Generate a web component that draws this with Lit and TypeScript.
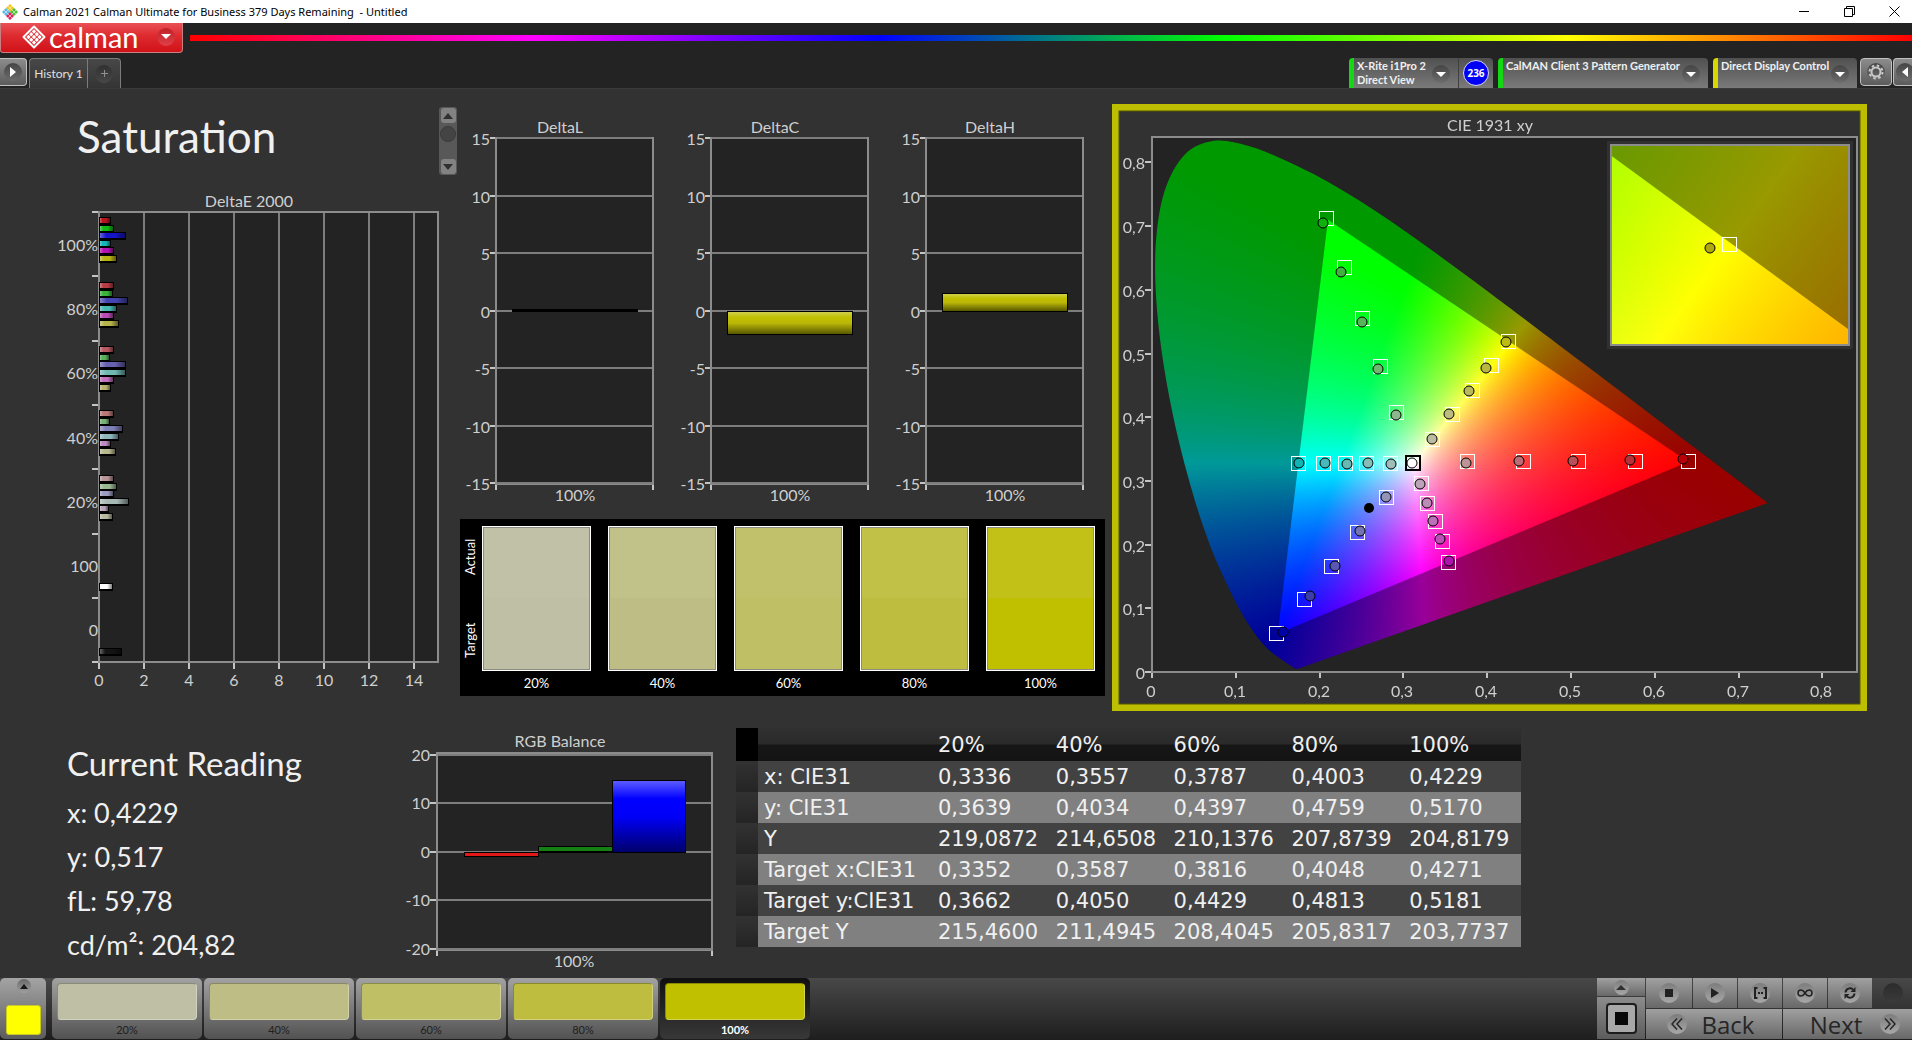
import { LitElement, html, svg, css } from "lit";
import { customElement, property } from "lit/decorators.js";
import { classMap } from "lit/directives/class-map.js";
import { styleMap } from "lit/directives/style-map.js";

/* ---------- data ---------- */

const LEVELS = ["20%", "40%", "60%", "80%", "100%"];

const SWATCHES = [
  { label: "20%", actual: "#c1c1a8", target: "#bfbfa6" },
  { label: "40%", actual: "#c1c18a", target: "#bfbd86" },
  { label: "60%", actual: "#c1c16b", target: "#bfbf66" },
  { label: "80%", actual: "#c1c148", target: "#bfbd3f" },
  { label: "100%", actual: "#c1c118", target: "#c0c000" },
];

const TABLE: [string, string[]][] = [
  ["x: CIE31", ["0,3336", "0,3557", "0,3787", "0,4003", "0,4229"]],
  ["y: CIE31", ["0,3639", "0,4034", "0,4397", "0,4759", "0,5170"]],
  ["Y", ["219,0872", "214,6508", "210,1376", "207,8739", "204,8179"]],
  ["Target x:CIE31", ["0,3352", "0,3587", "0,3816", "0,4048", "0,4271"]],
  ["Target y:CIE31", ["0,3662", "0,4050", "0,4429", "0,4813", "0,5181"]],
  ["Target Y", ["215,4600", "211,4945", "208,4045", "205,8317", "203,7737"]],
];

/* first bar centre, bar lengths and bar colours of each saturation group */
const DELTA_E: { y: number; bars: [number, string][] }[] = [
  { y: 37, bars: [[12, "#b81420"], [15, "#14b814"], [27, "#1414c8"], [12, "#14b8b8"], [15, "#b414b4"], [18, "#b8b414"]] },
  { y: 102, bars: [[15, "#b83c44"], [14, "#3cb43c"], [29, "#4444b0"], [18, "#48b8b4"], [15, "#b84cb4"], [20, "#b8b44c"]] },
  { y: 166, bars: [[15, "#b85860"], [11, "#58b058"], [27, "#6860b0"], [27, "#70b8b4"], [15, "#c070bc"], [12, "#b8b470"]] },
  { y: 230, bars: [[15, "#b87878"], [11, "#78b078"], [24, "#8080b8"], [20, "#90b8bc"], [12, "#bc8cc0"], [17, "#b8b890"]] },
  { y: 295, bars: [[15, "#b89498"], [18, "#98b890"], [15, "#9c9cc0"], [30, "#a8b8b4"], [10, "#b8a4b8"], [14, "#b8b8a0"]] },
  { y: 403, bars: [[14, "#ffffff"]] },
  { y: 468, bars: [[23, "#141414"]] },
];

/* ---------- CIE diagram geometry ---------- */

const CIE_W = 741;
const CIE_H = 593;
const px = (x: number) => 33 + x * 838;
const py = (y: number) => 561 - y * 637;

const LOCUS = [
  [0.1741, 0.005], [0.1714, 0.0051], [0.1689, 0.0069], [0.1644, 0.0109], [0.1566, 0.0177], [0.144, 0.0297],
  [0.1355, 0.0399], [0.1241, 0.0578], [0.1096, 0.0868], [0.0913, 0.1327], [0.0687, 0.2007], [0.0454, 0.295],
  [0.0235, 0.4127], [0.0082, 0.5384], [0.0039, 0.6548], [0.0139, 0.7502], [0.0389, 0.812], [0.0743, 0.8338],
  [0.1142, 0.8262], [0.1547, 0.8059], [0.1929, 0.7816], [0.2296, 0.7543], [0.2658, 0.7243], [0.3016, 0.6923],
  [0.3373, 0.6589], [0.3731, 0.6245], [0.4087, 0.5896], [0.4441, 0.5547], [0.5125, 0.4866], [0.5752, 0.4242],
  [0.627, 0.3725], [0.6658, 0.334], [0.6915, 0.3083], [0.719, 0.2809], [0.7347, 0.2653],
];
const GAMUT = [[0.64, 0.33], [0.21, 0.71], [0.15, 0.06]];

/* target centre, reading centre, fill of the reading */
const POINTS: [number, number, number, number, string][] = [
  [207, 107, 204, 112, "#10b010"], [225, 156, 222, 161, "#40b040"], [243, 207, 243, 211, "#58b458"],
  [261, 255, 259, 258, "#70b870"], [277, 301, 277, 304, "#8cb88c"],
  [389, 230, 387, 231, "#bcbc14"], [372, 254, 367, 257, "#b8b840"], [353, 279, 350, 280, "#b8b85c"],
  [333, 303, 330, 303, "#bcbc80"], [313, 328, 313, 328, "#bcbca4"],
  [179, 352, 180, 352, "#10b4b4"], [204, 352, 206, 352, "#48b8b8"], [226, 352, 228, 353, "#68b8b4"],
  [247, 352, 249, 352, "#88bcb8"], [271, 352, 272, 353, "#a0bcb8"],
  [348, 350, 347, 352, "#bc9494"], [404, 350, 400, 350, "#bc6c74"], [459, 350, 454, 350, "#b85058"],
  [516, 350, 511, 349, "#b83038"], [569, 350, 564, 348, "#b80008"],
  [267, 386, 267, 386, "#9494b8"], [238, 421, 241, 420, "#7474b4"], [212, 455, 216, 455, "#5858b4"],
  [185, 488, 191, 485, "#3c3cac"], [157, 522, 164, 521, "#0000a8"],
  [302, 372, 301, 373, "#bca4b8"], [308, 392, 308, 392, "#bc8cb8"], [316, 410, 314, 410, "#bc70b8"],
  [323, 430, 321, 428, "#bc50b8"], [329, 451, 330, 450, "#b010b0"],
];

/** Brightest displayable colour of a chromaticity, scaled by `level`. */
function chroma(x: number, y: number, level: number): [number, number, number] {
  const X = x / y;
  const Z = (1 - x - y) / y;
  const r = Math.max(0, 3.2406 * X - 1.5372 - 0.4986 * Z);
  const g = Math.max(0, -0.9689 * X + 1.8758 + 0.0415 * Z);
  const b = Math.max(0, 0.0557 * X - 0.204 + 1.057 * Z);
  const k = (255 * level) / Math.max(r, g, b, 0.0001);
  return [r * k, g * k, b * k];
}

function field(w: number, h: number, level: number, at: (i: number, j: number) => [number, number]) {
  const c = document.createElement("canvas");
  c.width = w;
  c.height = h;
  const ctx = c.getContext("2d")!;
  const img = ctx.createImageData(w, h);
  for (let j = 0; j < h; j++) {
    for (let i = 0; i < w; i++) {
      const [x, y] = at(i, j);
      const [r, g, b] = chroma(x, Math.max(y, 0.002), level);
      const o = (j * w + i) * 4;
      img.data[o] = r;
      img.data[o + 1] = g;
      img.data[o + 2] = b;
      img.data[o + 3] = 255;
    }
  }
  ctx.putImageData(img, 0, 0);
  return c;
}

function polygon(points: number[][], fx: (v: number) => number, fy: (v: number) => number) {
  const p = new Path2D();
  points.forEach(([x, y], i) => (i ? p.lineTo(fx(x), fy(y)) : p.moveTo(fx(x), fy(y))));
  p.closePath();
  return p;
}

/** Closed outline that runs through every point as a Catmull-Rom curve. */
function smooth(points: number[][], fx: (v: number) => number, fy: (v: number) => number) {
  const q = points.map(([x, y]) => [fx(x), fy(y)]);
  const p = new Path2D();
  p.moveTo(q[0][0], q[0][1]);
  for (let i = 0; i < q.length - 1; i++) {
    const a = q[Math.max(i - 1, 0)];
    const b = q[i];
    const c = q[i + 1];
    const d = q[Math.min(i + 2, q.length - 1)];
    p.bezierCurveTo(
      b[0] + (c[0] - a[0]) / 6, b[1] + (c[1] - a[1]) / 6,
      c[0] - (d[0] - b[0]) / 6, c[1] - (d[1] - b[1]) / 6,
      c[0], c[1]
    );
  }
  p.closePath();
  return p;
}

/* ---------- shared styles ---------- */

const chartStyles = css`
  :host {
    display: block;
  }
  svg {
    display: block;
    width: 100%;
    height: auto;
    overflow: visible;
  }
  text {
    font-family: Lato, "Liberation Sans", sans-serif;
    font-size: 16px;
    fill: #cfcfcf;
  }
  .end {
    text-anchor: end;
  }
  .mid {
    text-anchor: middle;
  }
  .plot {
    fill: #232323;
    stroke: #8c8c8c;
    stroke-width: 2;
    shape-rendering: crispEdges;
  }
  .grid {
    stroke: #7d7d7d;
    stroke-width: 2;
    shape-rendering: crispEdges;
  }
  .tick {
    stroke: #c4c4c4;
    stroke-width: 2;
    shape-rendering: crispEdges;
  }
`;

/* ---------- DeltaE 2000 ---------- */

@customElement("delta-e-chart")
class DeltaEChart extends LitElement {
  static styles = chartStyles;

  render() {
    const names = ["100%", "80%", "60%", "40%", "20%", "100", "0"];
    const xs = [0, 1, 2, 3, 4, 5, 6, 7];
    return html`<svg viewBox="0 0 460 516" role="img" aria-label="DeltaE 2000">
      <defs>
        <linearGradient id="sheen">
          <stop offset="0" stop-color="#fff" stop-opacity=".35" />
          <stop offset=".25" stop-color="#fff" stop-opacity="0" />
          <stop offset=".6" stop-color="#000" stop-opacity="0" />
          <stop offset="1" stop-color="#000" stop-opacity=".5" />
        </linearGradient>
      </defs>
      <text class="mid" x="249" y="23">DeltaE 2000</text>
      <rect class="plot" x="99" y="28" width="339" height="450" />
      ${xs.map((i) => {
        const x = 99 + Math.round(i * 45);
        return svg`${i ? svg`<line class="grid" x1=${x} x2=${x} y1="29" y2="477" />` : ""}
          <line class="tick" x1=${x} x2=${x} y1="479" y2="485" />
          <text class="mid" x=${x} y="502">${i * 2}</text>`;
      })}
      ${xs.map((i) => {
        const y = 28 + Math.round(i * 64.3);
        return svg`<line class="tick" x1="92" x2="98" y1=${y} y2=${y} />`;
      })}
      ${names.map((n, i) => svg`<text class="end" x="98" y=${67 + Math.round(i * 64.2)}>${n}</text>`)}
      ${DELTA_E.map((g) =>
        g.bars.map(([w, c], i) => {
          const y = g.y + Math.round(i * 7.5) - 4;
          return svg`<rect x="99" y=${y} width=${w} height="8" fill="#000" />
            <rect x="100" y=${y + 1} width=${w - 2} height="5" fill=${c} />
            <rect x="100" y=${y + 1} width=${w - 2} height="5" fill="url(#sheen)" />`;
        })
      )}
    </svg>`;
  }
}

/* ---------- DeltaL / DeltaC / DeltaH ---------- */

@customElement("delta-chart")
class DeltaChart extends LitElement {
  static styles = chartStyles;
  @property() name = "";
  @property({ type: Number }) value = 0;

  render() {
    const zero = 199;
    const h = Math.max(3, Math.abs(Math.round(this.value * 11.6)));
    const top = this.value < 0 ? zero : zero + 1 - h;
    return html`<svg viewBox="0 0 215 407" role="img" aria-label=${this.name}>
      <defs>
        <linearGradient id="bar" x2="0" y2="1">
          <stop offset="0" stop-color="#cfcf50" />
          <stop offset=".25" stop-color="#c0c000" />
          <stop offset=".5" stop-color="#bcb808" />
          <stop offset="1" stop-color="#585800" />
        </linearGradient>
      </defs>
      <text class="mid" x="100" y="21">${this.name}</text>
      <rect class="plot" x="36" y="26" width="157" height="346" />
      ${[15, 10, 5, 0, -5, -10, -15].map((v) => {
        const y = zero - Math.round(v * 11.5);
        return svg`<line class="grid" x1="37" x2="192" y1=${y} y2=${y} />
          <line class="tick" x1="30" x2="35" y1=${y} y2=${y} />
          <text class="end" x="30" y=${y + 7}>${v}</text>`;
      })}
      <line class="tick" x1="36" x2="36" y1="373" y2="378" />
      <line class="tick" x1="193" x2="193" y1="373" y2="378" />
      <rect x="52" y=${top} width="126" height=${h} fill="#000" />
      ${h > 3 ? svg`<rect x="53" y=${top + 1} width="124" height=${h - 2} fill="url(#bar)" />` : ""}
      <text class="mid" x="115" y="389">100%</text>
    </svg>`;
  }
}

/* ---------- RGB balance ---------- */

@customElement("rgb-chart")
class RgbChart extends LitElement {
  static styles = chartStyles;

  render() {
    return html`<svg viewBox="0 0 326 242" role="img" aria-label="RGB Balance">
      <defs>
        <linearGradient id="blue" x2="0" y2="1">
          <stop offset="0" stop-color="#5c5cff" />
          <stop offset=".25" stop-color="#0000ff" />
          <stop offset=".5" stop-color="#0000f8" />
          <stop offset="1" stop-color="#00006c" />
        </linearGradient>
      </defs>
      <text class="mid" x="150" y="19">RGB Balance</text>
      <rect class="plot" x="27" y="25" width="275" height="197" />
      ${[20, 10, 0, -10, -20].map((v) => {
        const y = 124 - Math.round(v * 4.85);
        return svg`<line class="grid" x1="28" x2="301" y1=${y} y2=${y} />
          <line class="tick" x1="20" x2="26" y1=${y} y2=${y} />
          <text class="end" x="20" y=${y + 6}>${v}</text>`;
      })}
      <line class="tick" x1="27" x2="27" y1="223" y2="228" />
      <line class="tick" x1="302" x2="302" y1="223" y2="228" />
      <rect x="54" y="124" width="75" height="5" fill="#000" />
      <rect x="55" y="125" width="73" height="3" fill="#e01818" />
      <rect x="128" y="118" width="75" height="7" fill="#000" />
      <rect x="129" y="119" width="73" height="4" fill="#148014" />
      <rect x="202" y="52" width="74" height="73" fill="#000" />
      <rect x="203" y="53" width="72" height="71" fill="url(#blue)" />
      <text class="mid" x="164" y="239">100%</text>
    </svg>`;
  }
}

/* ---------- CIE 1931 xy ---------- */

@customElement("cie-chart")
class CieChart extends LitElement {
  static styles = [
    chartStyles,
    css`
      :host {
        display: grid;
        border: 7px solid #bebe00;
      }
      canvas,
      svg {
        grid-area: 1 / 1;
        width: 100%;
        height: auto;
      }
      .frame {
        fill: none;
        stroke: #8c8c8c;
        stroke-width: 2;
        shape-rendering: crispEdges;
      }
      .rim {
        fill: none;
        stroke: #565600;
      }
      .target {
        fill: none;
        stroke: #fff;
        stroke-width: 1;
        shape-rendering: crispEdges;
      }
      .white {
        stroke: #000;
        stroke-width: 2;
      }
      .reading {
        stroke: #000;
        stroke-width: 1;
      }
    `,
  ];

  firstUpdated() {
    const ctx = this.renderRoot.querySelector("canvas")!.getContext("2d")!;
    ctx.fillStyle = "#232323";
    ctx.fillRect(33, 26, 705, 535);

    const at = (i: number, j: number): [number, number] => [(i - 33) / 838, (561 - j) / 637];
    ctx.save();
    ctx.clip(smooth(LOCUS, px, py));
    ctx.drawImage(field(CIE_W, CIE_H, 0.6, at), 0, 0);
    ctx.clip(polygon(GAMUT, px, py));
    ctx.drawImage(field(CIE_W, CIE_H, 1, at), 0, 0);
    ctx.restore();

    /* magnified view round the current target */
    const [L, T, W, H] = [492, 34, 238, 200];
    const zx = (x: number) => L + W / 2 + (x - 0.4271) * 4524;
    const zy = (y: number) => T + H / 2 - (y - 0.5175) * 3750;
    const zoom = (i: number, j: number): [number, number] => [
      0.4271 + (i - W / 2) / 4524,
      0.5175 - (j - H / 2) / 3750,
    ];
    ctx.fillStyle = "#303030";
    ctx.fillRect(L - 4, T - 4, W + 8, H + 8);
    ctx.drawImage(field(W, H, 0.6, zoom), L, T);
    ctx.save();
    ctx.beginPath();
    ctx.rect(L, T, W, H);
    ctx.clip();
    ctx.clip(polygon(GAMUT, zx, zy));
    ctx.drawImage(field(W, H, 1, zoom), L, T);
    ctx.restore();
  }

  render() {
    const steps = [0, 1, 2, 3, 4, 5, 6, 7, 8];
    const name = (i: number) => (i ? `0,${i}` : "0");
    const box = (x: number, y: number, cls = "") =>
      svg`<rect class=${"target " + cls} x=${x - 7} y=${y - 7} width="14" height="14" />`;
    return html`<canvas width=${CIE_W} height=${CIE_H}></canvas>
      <svg viewBox="0 0 ${CIE_W} ${CIE_H}" role="img" aria-label="CIE 1931 xy">
        <rect class="rim" x="0" y="0" width=${CIE_W} height=${CIE_H} />
        <text class="mid" x="371" y="20">CIE 1931 xy</text>
        <rect class="frame" x="33" y="26" width="705" height="535" />
        ${steps.map((i) => {
          const x = Math.round(px(i / 10));
          const y = Math.round(py(i / 10));
          return svg`<line class="tick" x1=${x} x2=${x} y1="562" y2="567" />
            <text class="mid" x=${x - 1} y="586">${name(i)}</text>
            <line class="tick" x1="26" x2="32" y1=${y} y2=${y} />
            <text class="end" x="26" y=${y + 7}>${name(i)}</text>`;
        })}
        ${POINTS.map((p) => box(p[0], p[1]))} ${box(294, 352, "white")}
        ${POINTS.map((p) => svg`<circle class="reading" cx=${p[2]} cy=${p[3]} r="5" fill=${p[4]} />`)}
        <circle class="reading" cx="293" cy="352" r="5" fill="#fff" />
        <circle cx="250" cy="397" r="5" />
        <rect class="frame" x="492" y="34" width="238" height="200" />
        ${box(610, 133)}
        <circle class="reading" cx="591" cy="137" r="5" fill="#b0a810" />
      </svg>`;
  }
}

/* ---------- application ---------- */

@customElement("app-root")
class AppRoot extends LitElement {
  static styles = css`
    * {
      box-sizing: border-box;
    }
    :host {
      display: flex;
      flex-direction: column;
      min-height: 100vh;
      background: #323232;
      color: #f0f0f0;
      font-family: Lato, "Liberation Sans", sans-serif;
      overflow: hidden;
    }
    button {
      margin: 0;
      padding: 0;
      border: 0;
      font: inherit;
      color: inherit;
      background: none;
      display: flex;
      align-items: center;
      justify-content: center;
    }
    svg {
      display: block;
      flex: none;
    }

    /* title bar */
    .titlebar {
      display: flex;
      align-items: center;
      height: 23px;
      background: #fff;
      color: #000;
      font: 11px "Noto Sans", "Open Sans", sans-serif;
      white-space: pre;
    }
    .titlebar > svg {
      margin: 0 5px 0 2px;
    }
    .caption {
      flex: 1;
    }
    .winbtn {
      width: 45px;
      height: 23px;
    }
    .close {
      width: 40px;
      padding-left: 5px;
    }

    /* header */
    .top {
      background: #232323;
    }
    .brandrow {
      display: flex;
      align-items: center;
      gap: 7px;
      height: 30px;
    }
    .brand {
      width: 183px;
      height: 30px;
      padding: 0 7px 2px 21px;
      gap: 3px;
      justify-content: flex-start;
      border: 1px solid #c98080;
      border-top: 0;
      border-radius: 0 0 4px 3px;
      background: linear-gradient(#ea5055, #dd2a2f 45%, #d01218);
      font-size: 29px;
      line-height: 26px;
      color: #fff;
    }
    .brandname {
      flex: 1;
      text-align: left;
    }
    .spectrum {
      flex: 1;
      height: 6px;
      background: linear-gradient(90deg, #f00, #f0f, #00f, #0f0, #ff0, #f00);
    }
    .tabs {
      display: flex;
      align-items: flex-end;
      height: 35px;
      font-size: 12px;
      color: #e0e0e0;
    }
    .knob {
      width: 18px;
      height: 18px;
      border-radius: 50%;
      background: linear-gradient(#454545, #6c6c6c);
      display: flex;
      align-items: center;
      justify-content: center;
      flex: none;
    }
    .redknob {
      background: linear-gradient(#c02028, #e04048);
    }
    .square {
      width: 32px;
      height: 28px;
      margin-bottom: 2px;
      border: 1px solid #c0c0c0;
      border-radius: 4px;
      background: linear-gradient(#8c8c8c, #5c5c5c);
    }
    .open {
      width: 27px;
      border-left: 0;
      border-radius: 0 4px 4px 0;
      margin-right: 2px;
    }
    .tab {
      height: 30px;
      width: 59px;
      border: 1px solid #7c7c7c;
      border-bottom: 0;
      border-radius: 4px 0 0 0;
      background: linear-gradient(#484848, #343434);
    }
    .add {
      width: 34px;
      margin-left: -1px;
      border-radius: 0 4px 0 0;
    }
    .addknob {
      background: linear-gradient(#303030, #484848);
    }
    .spacer {
      flex: 1;
    }
    .device {
      display: flex;
      height: 30px;
      border-left: 5px solid #14d814;
      border-radius: 4px 4px 0 0;
      background: linear-gradient(#505050, #7a7a7a);
      margin-right: 5px;
    }
    .yellow {
      border-left-color: #d8d800;
      margin-right: 3px;
    }
    .pick {
      flex: 1;
      justify-content: space-between;
      align-items: flex-start;
      text-align: left;
      padding: 1px 8px 0 3px;
      line-height: 14px;
      font-size: 11px;
      font-weight: 700;
      color: #f0f0f0;
      white-space: nowrap;
    }
    .pick .knob {
      margin-top: 6px;
    }
    .meter {
      width: 144px;
    }
    .source {
      width: 210px;
    }
    .display {
      width: 144px;
    }
    .badge {
      width: 35px;
      border-left: 1px solid #404040;
      display: flex;
      justify-content: center;
      padding-top: 2px;
    }
    .count {
      width: 26px;
      height: 26px;
      border: 1px solid #d8d8f8;
      border-radius: 50%;
      background: #0000f4;
      font: 700 10px/24px "Open Sans", sans-serif;
      text-align: center;
      color: #fff;
    }
    .edge {
      width: 19px;
      border-radius: 4px 0 0 4px;
      border-right: 0;
      margin-left: 1px;
      padding-left: 4px;
    }

    /* workspace */
    main {
      flex: 1;
      border-top: 1px solid #3a3a3a;
    }
    .upper {
      display: grid;
      grid-template-columns: minmax(0, 460fr) minmax(0, 652fr) minmax(0, 755fr) minmax(0, 45fr);
      align-items: start;
      padding: 15px 0 9px;
    }
    .heading {
      display: flex;
      justify-content: space-between;
      align-items: flex-start;
      padding: 3px 3px 9px 77px;
    }
    h1 {
      margin: 0;
      font-size: 44px;
      line-height: 58px;
      font-weight: 400;
    }
    .scroller {
      width: 18px;
      height: 68px;
      border-radius: 3px;
      background: #585858;
      display: flex;
      flex-direction: column;
      justify-content: space-between;
      align-items: center;
      padding: 1px;
    }
    .step {
      width: 15px;
      height: 15px;
      border-radius: 3px;
      background: #828282;
    }
    .thumb {
      width: 16px;
      height: 16px;
      border-radius: 50%;
      background: #444;
      border: 1px solid #3a3a3a;
      margin-bottom: 15px;
    }
    .middle {
      padding: 8px 7px 0 0;
    }
    .deltas {
      display: grid;
      grid-template-columns: repeat(3, minmax(0, 1fr));
    }
    .patches {
      display: flex;
      background: #000;
      padding: 7px 10px 1px 0;
      font-size: 13px;
      line-height: 24px;
      color: #fff;
    }
    .sides {
      width: 20px;
      height: 145px;
      margin-right: 2px;
      display: flex;
      flex-direction: row-reverse;
      writing-mode: vertical-rl;
      transform: rotate(180deg);
      justify-content: space-between;
      padding: 13px 0;
      line-height: 20px;
    }
    .patchrow {
      flex: 1;
      display: grid;
      grid-template-columns: repeat(5, minmax(0, 1fr));
      gap: 17px;
      text-align: center;
    }
    .patch {
      height: 145px;
      border: 1px solid #fff;
      outline: 1px solid #8c8c80;
      outline-offset: -2px;
    }

    .lower {
      display: grid;
      grid-template-columns: minmax(0, 410fr) minmax(0, 326fr) minmax(0, 785fr) minmax(0, 391fr);
      align-items: start;
      padding: 8px 0;
    }
    .reading {
      padding: 13px 0 0 67px;
      font-size: 27px;
      line-height: 44px;
    }
    h2 {
      margin: 0 0 6px;
      font-size: 33px;
      line-height: 44px;
      font-weight: 400;
    }
    p {
      margin: 0;
    }
    table {
      width: 100%;
      table-layout: fixed;
      border-collapse: collapse;
      font: 21px/29px "DejaVu Sans", sans-serif;
      color: #f0f0f0;
    }
    th,
    td {
      padding: 2px 0 0 6px;
      height: 31px;
      font-weight: 400;
      text-align: left;
      white-space: nowrap;
    }
    thead th {
      height: 33px;
      background: linear-gradient(#303030, #2a2a2a 48%, #161616 52%, #141414);
    }
    .c0 {
      width: 22px;
    }
    .c1 {
      width: 174px;
    }
    tbody tr {
      background: #424242;
    }
    tbody tr:nth-child(even) {
      background: #808080;
    }
    tbody td:first-child {
      background: linear-gradient(#323232, #242424);
    }
    thead th:first-child {
      background: #000;
    }

    /* bottom bar */
    .bar {
      display: flex;
      height: 62px;
      background: linear-gradient(#484848, #1e1e1e);
    }
    .source-cell {
      width: 46px;
      height: 61px;
      margin-right: 6px;
      border-radius: 5px;
      background: linear-gradient(#a4a4a4, #5c5c5c);
      flex-direction: column;
      justify-content: space-between;
      padding: 1px 0 4px 1px;
    }
    .source-cell .knob {
      width: 14px;
      height: 14px;
      background: linear-gradient(#686868, #a0a0a0);
    }
    .chip {
      width: 35px;
      height: 30px;
      border-radius: 3px;
      background: #ffff00;
      border: 1px solid #c8c820;
    }
    .tile {
      width: 150px;
      height: 61px;
      margin-right: 2px;
      padding: 5px 5px 0;
      border-radius: 5px;
      background: linear-gradient(#a2a2a2, #525252);
      flex-direction: column;
      justify-content: flex-start;
      gap: 3px;
      font-size: 11px;
      line-height: 14px;
      color: #202020;
    }
    .fill {
      width: 100%;
      height: 37px;
      border-radius: 4px;
      border: 1px solid rgb(0 0 0 / 0.28);
      border-right-color: rgb(255 255 255 / 0.3);
      border-bottom-color: rgb(255 255 255 / 0.3);
    }
    .active {
      background: linear-gradient(#101010, #383838);
      color: #fff;
      font-weight: 700;
    }
    .transport {
      display: grid;
      grid-template-columns: 48px 46px 44px 44px 44px 44px 39px;
      grid-template-rows: 30px 30px;
      gap: 1px;
      height: 61px;
      color: #262626;
    }
    .transport button {
      background: linear-gradient(#a0a0a0, #686868);
    }
    .transport .knob {
      width: 20px;
      height: 20px;
      background: linear-gradient(#7c7c7c, #a8a8a8);
    }
    .transport .stack {
      grid-row: 1 / 3;
      display: grid;
      grid-template-rows: 18px 1fr;
      gap: 1px;
    }
    .transport .stack .knob {
      width: 15px;
      height: 15px;
    }
    .transport .stack .window {
      background: linear-gradient(#8c8c8c, #5c5c5c);
    }
    .transport .off {
      background: none;
    }
    .transport .off .knob {
      background: linear-gradient(#2c2c2c, #3a3a3a);
    }
    .transport .nav {
      font: 24px "Open Sans", "Noto Sans", sans-serif;
      gap: 15px;
    }
    .transport .back {
      grid-column: 2 / 5;
      padding-right: 7px;
    }
    .transport .next {
      grid-column: 5 / 8;
      padding-left: 15px;
      gap: 18px;
    }
  `;

  private arrow() {
    return html`<svg width="10" height="5" viewBox="0 0 10 5"><path d="M0 0h10L5 5z" fill="#fff" /></svg>`;
  }

  render() {
    const stones = [
      [12, 6.5], [9.2, 9.2], [14.8, 9.2], [6.5, 12], [12, 12], [17.5, 12], [9.2, 14.8], [14.8, 14.8], [12, 17.5],
    ];
    return html`
      <div class="titlebar">
        <svg width="16" height="16" viewBox="0 0 16 16">
          <path d="M8 0l4 4-4 4-4-4z" fill="#f5c518" />
          <path d="M4 4l4 4-4 4-4-4z" fill="#58b8e8" />
          <path d="M12 4l4 4-4 4-4-4z" fill="#48c030" />
          <path d="M8 8l4 4-4 4-4-4z" fill="#e0205c" />
          <path d="M6 2l8 8M10 2l-8 8M2 6l8 8M14 6l-8 8" stroke="#fff" stroke-width=".7" opacity=".8" />
        </svg>
        <span class="caption">Calman 2021 Calman Ultimate for Business 379 Days Remaining  - Untitled</span>
        <button class="winbtn" aria-label="Minimize">
          <svg width="11" height="11" viewBox="0 0 11 11"><path d="M0 5.5h10" stroke="#000" /></svg>
        </button>
        <button class="winbtn" aria-label="Restore">
          <svg width="11" height="11" viewBox="0 0 11 11">
            <path d="M.5 2.5h8v8h-8zM2.5 2.5v-2h8v8h-2" fill="none" stroke="#000" />
          </svg>
        </button>
        <button class="winbtn close" aria-label="Close">
          <svg width="11" height="11" viewBox="0 0 11 11"><path d="M.5 .5l10 10M10.5 .5l-10 10" stroke="#000" /></svg>
        </button>
      </div>

      <header class="top">
        <div class="brandrow">
          <button class="brand">
            <svg width="24" height="24" viewBox="0 0 24 24">
              <path d="M12 1.5L22.5 12 12 22.5 1.5 12z" fill="none" stroke="#fff" stroke-width="2" stroke-linejoin="round" />
              ${stones.map(
                ([x, y]) => svg`<rect x="-1.600" y="-1.600" width="3.200" height="3.200" rx=".8" fill="#fff" transform="translate(${x} ${y}) rotate(45)" />`
              )}
            </svg>
            <span class="brandname">calman</span>
            <span class="knob redknob">${this.arrow()}</span>
          </button>
          <div class="spectrum"></div>
        </div>
        <div class="tabs">
          <button class="square open" aria-label="Show workflow">
            <span class="knob"><svg width="6" height="10" viewBox="0 0 6 10"><path d="M0 0l6 5-6 5z" fill="#fff" /></svg></span>
          </button>
          <button class="tab">History 1</button>
          <button class="tab add" aria-label="Add history">
            <span class="knob addknob"><svg width="7" height="7" viewBox="0 0 7 7"><path d="M3.5 0v7M0 3.5h7" stroke="#909090" /></svg></span>
          </button>
          <span class="spacer"></span>
          <div class="device meter">
            <button class="pick"><span>X-Rite i1Pro 2<br />Direct View</span><span class="knob">${this.arrow()}</span></button>
            <div class="badge"><span class="count">236</span></div>
          </div>
          <div class="device source">
            <button class="pick"><span>CalMAN Client 3 Pattern Generator</span><span class="knob">${this.arrow()}</span></button>
          </div>
          <div class="device display yellow">
            <button class="pick"><span>Direct Display Control</span><span class="knob">${this.arrow()}</span></button>
          </div>
          <button class="square" aria-label="Settings">
            <span class="knob">
              <svg width="16" height="16" viewBox="0 0 16 16">
                <circle cx="8" cy="8" r="4.5" fill="none" stroke="#c8c8c8" stroke-width="2" />
                <circle cx="8" cy="8" r="6.5" fill="none" stroke="#c8c8c8" stroke-width="2" stroke-dasharray="2.55 2.55" />
              </svg>
            </span>
          </button>
          <button class="square edge" aria-label="Show panel">
            <span class="knob"><svg width="6" height="10" viewBox="0 0 6 10"><path d="M6 0L0 5l6 5z" fill="#fff" /></svg></span>
          </button>
        </div>
      </header>

      <main>
        <section class="upper">
          <div>
            <div class="heading">
              <h1>Saturation</h1>
              <div class="scroller">
                <button class="step" aria-label="Up"><svg width="10" height="6" viewBox="0 0 10 6"><path d="M0 6h10L5 0z" fill="#303030" /></svg></button>
                <span class="thumb"></span>
                <button class="step" aria-label="Down"><svg width="10" height="6" viewBox="0 0 10 6"><path d="M0 0h10L5 6z" fill="#303030" /></svg></button>
              </div>
            </div>
            <delta-e-chart></delta-e-chart>
          </div>
          <div class="middle">
            <div class="deltas">
              <delta-chart name="DeltaL" value="0"></delta-chart>
              <delta-chart name="DeltaC" value="-2.1"></delta-chart>
              <delta-chart name="DeltaH" value="1.6"></delta-chart>
            </div>
            <div class="patches">
              <div class="sides"><span>Actual</span><span>Target</span></div>
              <div class="patchrow">
                ${SWATCHES.map(
                  (s) => html`<div>
                    <div class="patch" style=${styleMap({ background: `linear-gradient(${s.actual} 50%, ${s.target} 50%)` })}></div>
                    ${s.label}
                  </div>`
                )}
              </div>
            </div>
          </div>
          <cie-chart></cie-chart>
        </section>

        <section class="lower">
          <div class="reading">
            <h2>Current Reading</h2>
            <p>x: 0,4229</p>
            <p>y: 0,517</p>
            <p>fL: 59,78</p>
            <p>cd/m²: 204,82</p>
          </div>
          <rgb-chart></rgb-chart>
          <table>
            <colgroup><col class="c0" /><col class="c1" /><col span="5" /></colgroup>
            <thead>
              <tr><th></th><th></th>${LEVELS.map((l) => html`<th scope="col">${l}</th>`)}</tr>
            </thead>
            <tbody>
              ${TABLE.map(
                ([name, cells]) => html`<tr><td></td><th scope="row">${name}</th>${cells.map((c) => html`<td>${c}</td>`)}</tr>`
              )}
            </tbody>
          </table>
        </section>
      </main>

      <footer class="bar">
        <button class="source-cell" aria-label="Pattern colour">
          <span class="knob"><svg width="8" height="5" viewBox="0 0 8 5"><path d="M0 5h8L4 0z" fill="#181818" /></svg></span>
          <span class="chip"></span>
        </button>
        ${SWATCHES.map(
          (s, i) => html`<button class=${classMap({ tile: true, active: i === 4 })}>
            <span class="fill" style=${styleMap({ background: s.target })}></span>${s.label}
          </button>`
        )}
        <span class="spacer"></span>
        <div class="transport">
          <div class="stack">
            <button aria-label="Expand"><span class="knob"><svg width="10" height="5" viewBox="0 0 10 5"><path d="M0 5h10L5 0z" fill="#303030" /></svg></span></button>
            <button class="window" aria-label="Pattern window">
              <svg width="31" height="31" viewBox="0 0 31 31">
                <rect x="1" y="1" width="29" height="29" rx="3" fill="#a8a8a8" stroke="#1c1c1c" stroke-width="2" />
                <rect x="9" y="9" width="13" height="13" fill="#080808" />
              </svg>
            </button>
          </div>
          <button aria-label="Stop"><span class="knob"><svg width="8" height="8" viewBox="0 0 8 8"><path d="M0 0h8v8H0z" fill="#222" /></svg></span></button>
          <button aria-label="Play"><span class="knob"><svg width="8" height="10" viewBox="0 0 8 10"><path d="M0 0l8 5-8 5z" fill="#222" /></svg></span></button>
          <button aria-label="Read series">
            <span class="knob"><svg width="13" height="12" viewBox="0 0 13 12">
              <path d="M3.5 1H1v10h2.5M9.5 1H12v10H9.5" fill="none" stroke="#222" stroke-width="2" />
              <path d="M4 5h2v2H4zM7 5h2v2H7z" fill="#222" />
            </svg></span>
          </button>
          <button aria-label="Continuous">
            <span class="knob"><svg width="16" height="8" viewBox="0 0 16 8">
              <path d="M8 4C6.5 1.5 5.5 1 4 1a3 3 0 0 0 0 6c1.5 0 2.5-.5 4-3s2.5-3 4-3a3 3 0 0 1 0 6c-1.5 0-2.5-.5-4-3z" fill="none" stroke="#222" stroke-width="1.5" />
            </svg></span>
          </button>
          <button aria-label="Refresh">
            <span class="knob"><svg width="12" height="12" viewBox="0 0 12 12">
              <path d="M1.5 5.5A4.5 4.5 0 0 1 9 2.5M10.5 6.5A4.5 4.5 0 0 1 3 9.5" fill="none" stroke="#222" stroke-width="2" />
              <path d="M11.5 0v5h-5zM.5 12V7h5z" fill="#222" />
            </svg></span>
          </button>
          <button class="off" aria-label="Record"><span class="knob"></span></button>
          <button class="nav back">
            <span class="knob"><svg width="12" height="12" viewBox="0 0 12 12"><path d="M6 .5L1 6l5 5.5M11 .5L6 6l5 5.5" fill="none" stroke="#262626" stroke-width="1.5" /></svg></span>Back
          </button>
          <button class="nav next">
            Next<span class="knob"><svg width="12" height="12" viewBox="0 0 12 12"><path d="M1 .5L6 6l-5 5.5M6 .5L11 6l-5 5.5" fill="none" stroke="#262626" stroke-width="1.5" /></svg></span>
          </button>
        </div>
      </footer>
    `;
  }
}
